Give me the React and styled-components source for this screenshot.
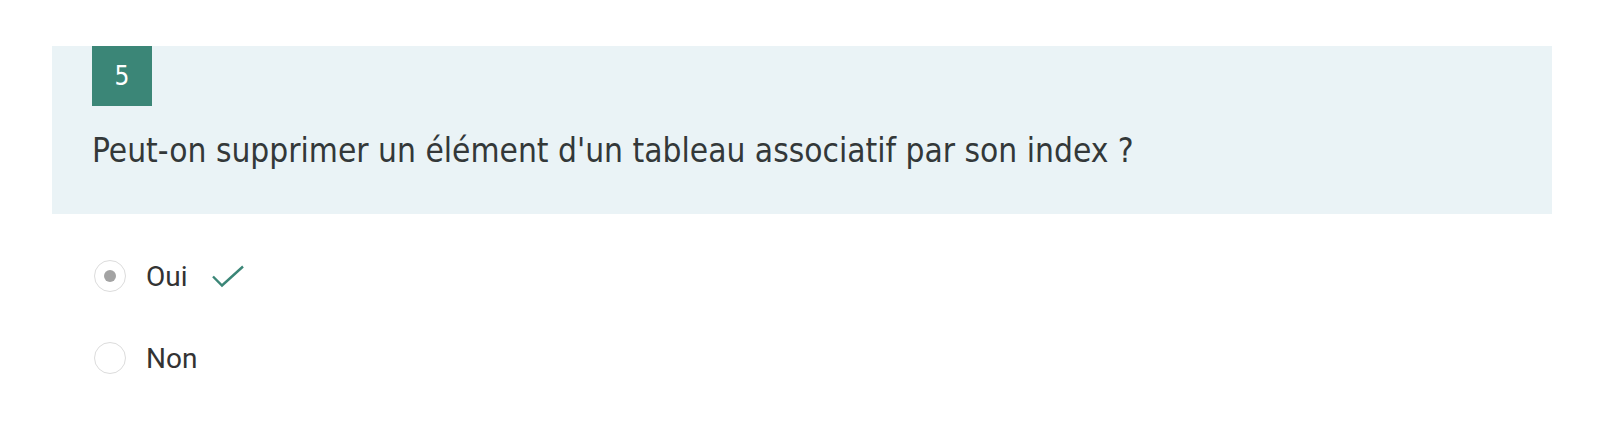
import React from "react";
import styled, { createGlobalStyle } from "styled-components";

const Global = createGlobalStyle`
  html, body { margin: 0; padding: 0; background: #ffffff; }
  body { font-family: "DejaVu Sans Condensed", "DejaVu Sans", sans-serif; }
`;

const Page = styled.div`
  padding: 46px 54px 40px 52px;
`;

const QuestionPanel = styled.section`
  background: #eaf3f6;
  padding: 0 40px 43px 40px;
  display: flex;
  flex-direction: column;
  align-items: flex-start;
`;

const Badge = styled.div`
  width: 60px;
  height: 60px;
  background: #3b8677;
  color: #ffffff;
  font-family: "DejaVu Sans Condensed", "DejaVu Sans", sans-serif;
  font-size: 26px;
  display: flex;
  align-items: center;
  justify-content: center;
`;

const QuestionText = styled.h2`
  margin: 25px 0 0 0;
  font-weight: normal;
  font-size: 33.2px;
  line-height: 40px;
  color: #333839;
  font-family: "DejaVu Sans Condensed", "DejaVu Sans", sans-serif;
`;

const Answers = styled.div`
  display: flex;
  flex-direction: column;
  gap: 50px;
  padding: 46px 0 0 42px;
`;

const Row = styled.label`
  display: flex;
  align-items: center;
  height: 32px;
  font-family: Roboto, "Liberation Sans", sans-serif;
  font-size: 28px;
  color: #333333;
`;

const Radio = styled.span`
  box-sizing: border-box;
  width: 32px;
  height: 32px;
  border-radius: 50%;
  border: 1px solid #dcdcdc;
  background: #ffffff;
  display: flex;
  align-items: center;
  justify-content: center;
  margin-right: 20px;
  &::after {
    content: "";
    width: 12px;
    height: 12px;
    border-radius: 50%;
    background: ${(p) => (p.$checked ? "#a3a3a3" : "transparent")};
  }
`;

const Check = styled.svg`
  margin-left: 24px;
  margin-top: 1px;
`;

function CheckIcon() {
  return (
    <Check width="32" height="23" viewBox="0 0 32 23">
      <polyline
        points="1,11.5 10,20.5 31,1.5"
        fill="none"
        stroke="#3b8677"
        strokeWidth="2.4"
      />
    </Check>
  );
}

export default function App() {
  return (
    <>
      <Global />
      <Page>
        <QuestionPanel>
          <Badge>5</Badge>
          <QuestionText>
            Peut-on supprimer un élément d'un tableau associatif par son index ?
          </QuestionText>
        </QuestionPanel>
        <Answers>
          <Row>
            <Radio $checked />
            Oui
            <CheckIcon />
          </Row>
          <Row>
            <Radio />
            Non
          </Row>
        </Answers>
      </Page>
    </>
  );
}
